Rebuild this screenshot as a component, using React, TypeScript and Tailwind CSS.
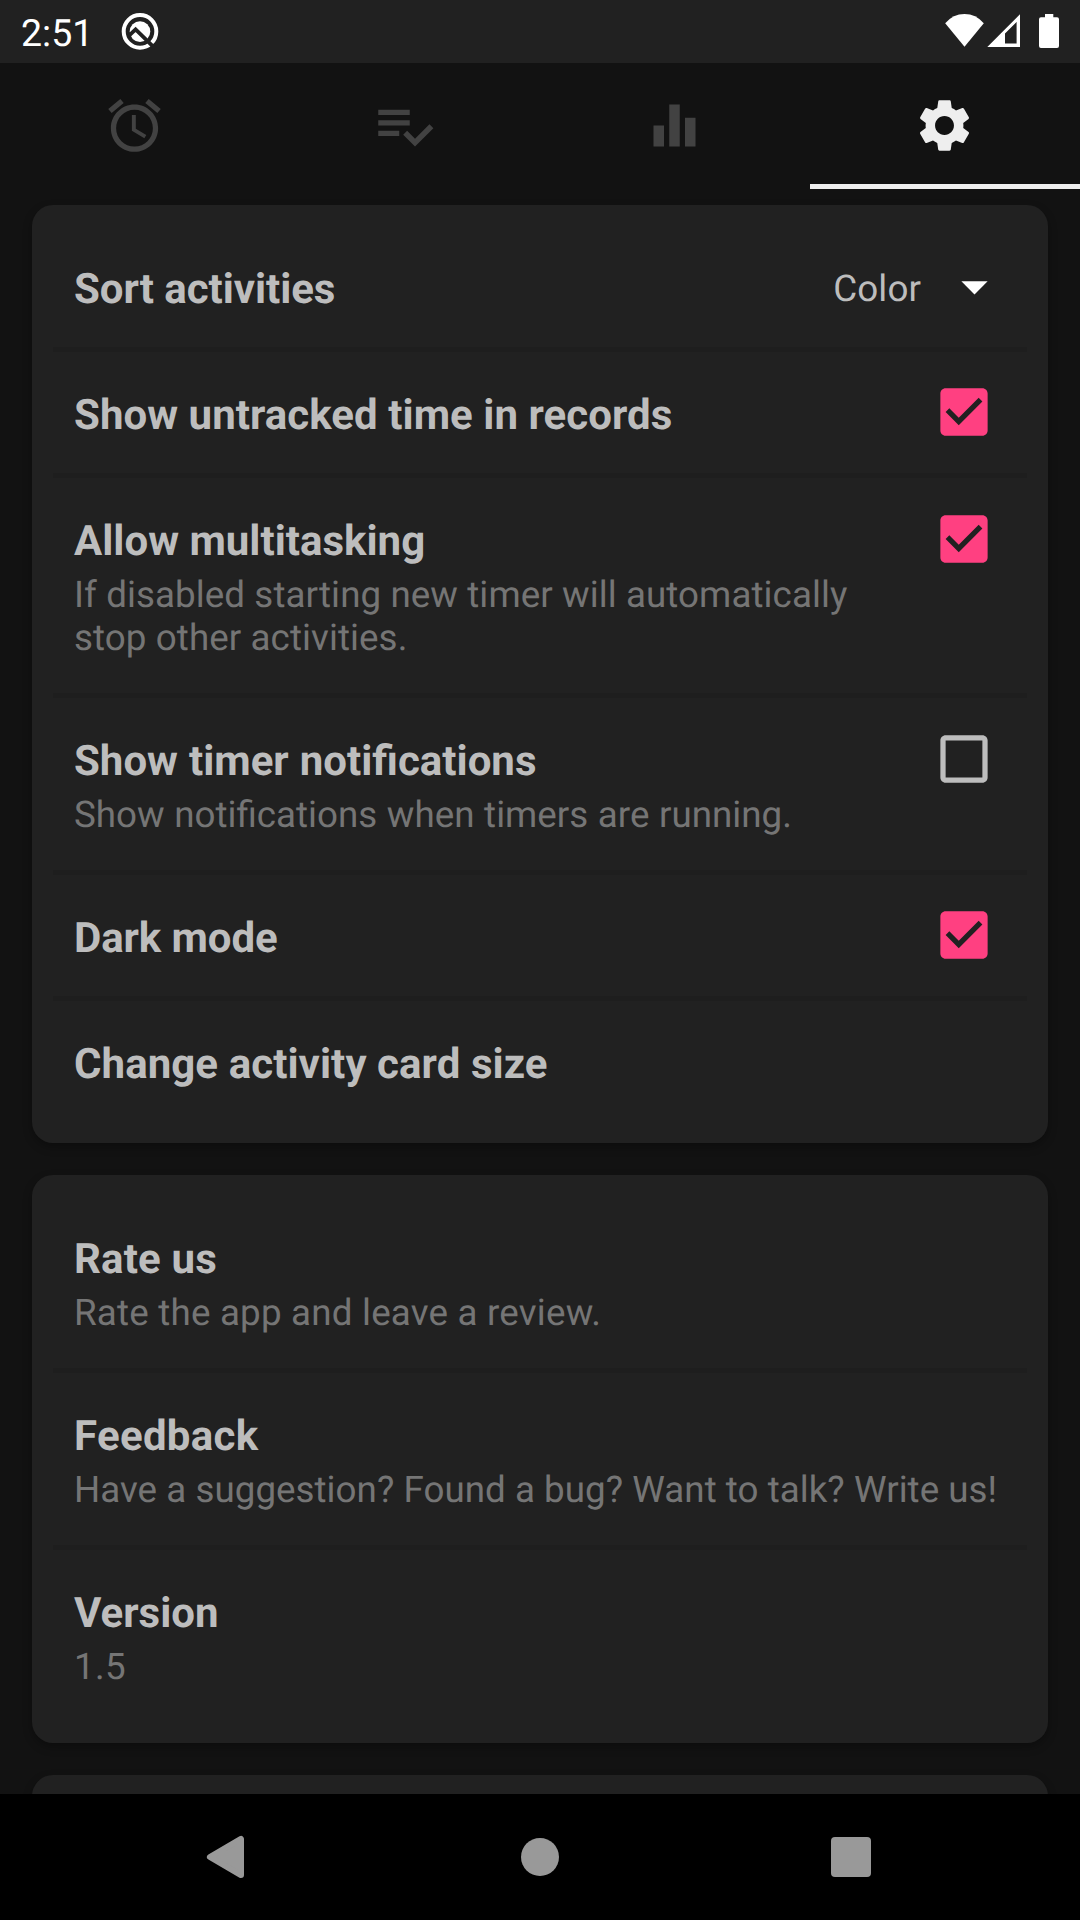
import type { ReactNode } from 'react';

function Check({ on }: { on: boolean }) {
  return (
    <svg viewBox="-0.19 -0.19 24.38 24.38" className="mr-[52px] h-[64px] w-[64px] shrink-0">
      {on ? (
        <path fill="#ff4081" d="M19 3H5c-1.11 0-2 .9-2 2v14c0 1.1.89 2 2 2h14c1.11 0 2-.9 2-2V5c0-1.1-.89-2-2-2zm-9 14l-5-5 1.41-1.41L10 14.17l7.59-7.59L19 8l-9 9z" />
      ) : (
        <path fill="#bdbdbd" d="M19 5v14H5V5h14m0-2H5c-1.1 0-2 .9-2 2v14c0 1.1.9 2 2 2h14c1.1 0 2-.9 2-2V5c0-1.1-.9-2-2-2z" />
      )}
    </svg>
  );
}

type RowProps = { title: string; sub?: ReactNode; height?: string; right?: ReactNode; titleClass?: string; subClass?: string };

function Row({ title, sub, height = 'h-[121px]', right, titleClass = '', subClass = '' }: RowProps) {
  return (
    <div className={`flex items-start justify-between pl-[42px] ${height}`}>
      <div className="pt-[39px]">
        <div className={`text-[42px] leading-[50px] font-bold whitespace-nowrap text-[#bdbdbd] ${titleClass}`}>{title}</div>
        {sub && <div className={`mt-[6px] text-[36.75px] leading-[43px] whitespace-nowrap text-[#757575] ${subClass}`}>{sub}</div>}
      </div>
      {right && <div className={sub ? 'pt-[29px]' : 'pt-[28px]'}>{right}</div>}
    </div>
  );
}

function Divider() {
  return <div className="mx-[21px] h-[5px] bg-[#1e1e1e]" />;
}

function Card({ children }: { children?: ReactNode }) {
  return <section className="shrink-0 rounded-[21px] bg-[#212121] py-[21px] shadow-[0_4px_10px_rgba(0,0,0,0.3)]">{children}</section>;
}

function Tab({ d, active = false }: { d: string; active?: boolean }) {
  return (
    <div className="flex h-[126px] w-[270px] flex-col justify-between pt-[31px]">
      <svg viewBox="0 0 24 24" className={`ml-[103px] h-[63px] w-[63px] ${active ? 'fill-[#eeeeee]' : 'fill-[#424242]'}`}>
        <path d={d} />
      </svg>
      {active && <div className="h-[5px] bg-[#eeeeee]" />}
    </div>
  );
}

const tabs = [
  'M22 5.72l-4.6-3.86-1.29 1.53 4.6 3.86L22 5.72zM7.88 3.39L6.6 1.86 2 5.71l1.29 1.53 4.59-3.85zM12.5 8H11v6l4.75 2.85.75-1.23-4-2.37V8zM12 4c-4.97 0-9 4.03-9 9s4.02 9 9 9c4.97 0 9-4.03 9-9s-4.03-9-9-9zm0 16c-3.87 0-7-3.13-7-7s3.13-7 7-7 7 3.13 7 7-3.13 7-7 7z',
  'M14 10H2v2h12v-2zm0-4H2v2h12V6zM2 16h8v-2H2v2zm19.5-4.5L23 13l-6.99 7-4.51-4.5L13 14l3.01 3 5.49-5.5z',
  'M10 20h4V4h-4v16zm-6 0h4v-8H4v8zM16 9v11h4V9h-4z',
  'M19.14 12.94c.04-.3.06-.61.06-.94 0-.32-.02-.64-.07-.94l2.03-1.58c.18-.14.23-.41.12-.61l-1.92-3.32c-.12-.22-.37-.29-.59-.22l-2.39.96c-.5-.38-1.03-.7-1.62-.94l-.36-2.54c-.04-.24-.24-.41-.48-.41h-3.84c-.24 0-.43.17-.47.41l-.36 2.54c-.59.24-1.13.57-1.62.94l-2.39-.96c-.22-.08-.47 0-.59.22L2.74 8.87c-.12.21-.08.47.12.61l2.03 1.58c-.05.3-.09.63-.09.94s.02.64.07.94l-2.03 1.58c-.18.14-.23.41-.12.61l1.92 3.32c.12.22.37.29.59.22l2.39-.96c.5.38 1.03.7 1.62.94l.36 2.54c.05.24.24.41.48.41h3.84c.24 0 .44-.17.47-.41l.36-2.54c.59-.24 1.13-.56 1.62-.94l2.39.96c.22.08.47 0 .59-.22l1.92-3.32c.12-.22.07-.47-.12-.61l-2.01-1.58zM12 15.6c-1.98 0-3.6-1.62-3.6-3.6s1.62-3.6 3.6-3.6 3.6 1.62 3.6 3.6-1.62 3.6-3.6 3.6z',
];

function StatusBar() {
  return (
    <header className="flex h-[63px] shrink-0 items-start justify-between bg-[#212121] pr-[21px] pl-[21px] text-white">
      <div className="flex">
        <div className="w-[97px] pt-[12px] text-[37.5px] leading-[44px]">2:51</div>
        <svg viewBox="0 0 44 44" className="mt-[9px] h-[44px] w-[44px]">
          <circle cx="22" cy="22.4" r="16.3" fill="none" stroke="#fff" strokeWidth="4" />
          <circle cx="22" cy="22.6" r="10.3" fill="#fff" />
          <path d="M10.5 27.2L17.6 20.4L37 39.4" fill="none" stroke="#212121" strokeWidth="3.8" />
        </svg>
      </div>
      <svg viewBox="944 0 115 63" className="h-[63px] w-[115px]" fill="#fff">
        <path d="M964.5 46.8L945.2 23.3Q953 14 964.5 14T983.8 23.3Z" />
        <path fillRule="evenodd" d="M987.3 47L1020 14.3V47ZM1005 33.5V43.4H1016.6V22Z" />
        <path d="M1045 14h8.3v3.3h3.7a2 2 0 0 1 2 2V46a2 2 0 0 1-2 2h-16a2 2 0 0 1-2-2V19.3a2 2 0 0 1 2-2h4z" />
      </svg>
    </header>
  );
}

export default function App() {
  return (
    <div className="flex h-[1920px] w-[1080px] flex-col overflow-hidden bg-[#121212] font-[Roboto,sans-serif] [text-rendering:geometricPrecision]">
      <StatusBar />
      <nav className="flex h-[126px] shrink-0">
        {tabs.map((d, i) => (
          <Tab key={i} d={d} active={i === 3} />
        ))}
      </nav>
      <main className="flex min-h-0 flex-1 flex-col gap-[32px] overflow-hidden px-[32px] pt-[16px]">
        <Card>
          <div className="flex h-[121px] items-start justify-between">
            <Row title="Sort activities" titleClass="tracking-[-0.06px]" />
            <div className="mr-[42px] flex">
              <span className="mr-[22px] pt-[41px] text-[36.75px] leading-[43px] tracking-[0.1px] text-[#bdbdbd]">Color</span>
              <svg viewBox="0 0 24 24" className="mt-[28.75px] h-[63px] w-[63px]">
                <path fill="#fff" d="M7 10l5 5 5-5z" />
              </svg>
            </div>
          </div>
          <Divider />
          <Row title="Show untracked time in records" titleClass="tracking-[0.05px]" right={<Check on />} />
          <Divider />
          <Row title="Allow multitasking" sub={<>If disabled starting new timer will automatically<br />stop other activities.</>} subClass="tracking-[0.08px]" height="h-[215px]" right={<Check on />} />
          <Divider />
          <Row title="Show timer notifications" titleClass="[word-spacing:0.6px]" sub="Show notifications when timers are running." subClass="[word-spacing:0.5px]" height="h-[172px]" right={<Check on={false} />} />
          <Divider />
          <Row title="Dark mode" titleClass="tracking-[-0.1px]" right={<Check on />} />
          <Divider />
          <Row title="Change activity card size" titleClass="tracking-[0.07px]" />
        </Card>
        <Card>
          <Row title="Rate us" titleClass="tracking-[0.15px]" sub="Rate the app and leave a review." subClass="tracking-[0.2px]" height="h-[172px]" />
          <Divider />
          <Row title="Feedback" titleClass="tracking-[0.3px]" sub="Have a suggestion? Found a bug? Want to talk? Write us!" subClass="tracking-[0.03px]" height="h-[172px]" />
          <Divider />
          <Row title="Version" sub="1.5" subClass="tracking-[0.3px]" height="h-[172px]" />
        </Card>
        <Card />
      </main>
      <footer className="flex h-[126px] shrink-0 items-center bg-black pl-[206px]">
        <svg viewBox="0 0 38 44" className="h-[44px] w-[38px]">
          <path d="M3.900 22L35 3.900V40.100Z" fill="#999" stroke="#999" strokeWidth="6" strokeLinejoin="round" />
        </svg>
        <div className="ml-[276.7px] h-[38.6px] w-[38.6px] rounded-full bg-[#999999]" />
        <div className="ml-[271.7px] h-[40px] w-[40px] rounded-[4px] bg-[#999999]" />
      </footer>
    </div>
  );
}
